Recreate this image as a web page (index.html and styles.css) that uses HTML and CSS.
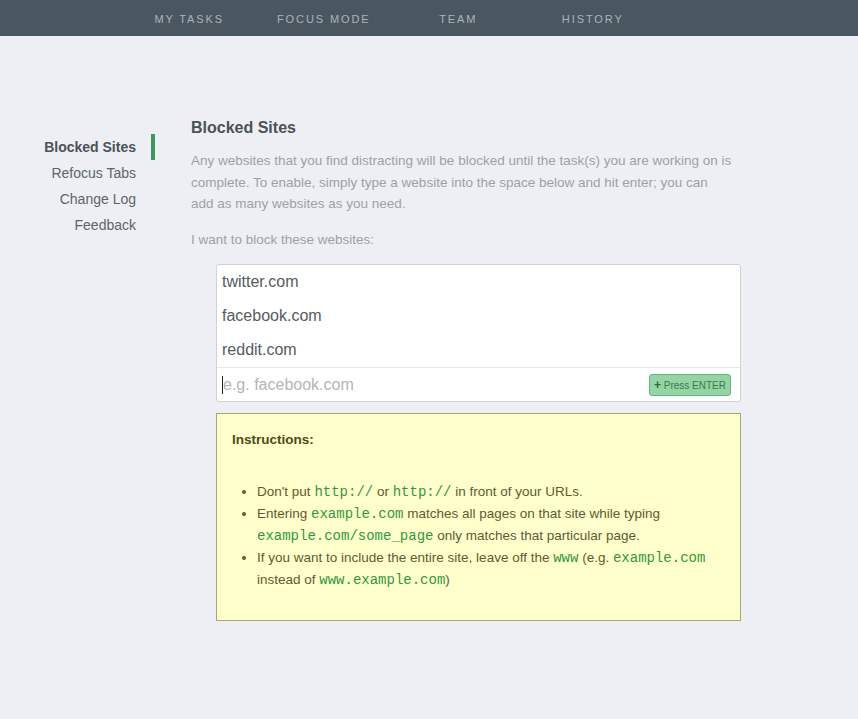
FILE: index.html
```html
<!DOCTYPE html>
<html>
<head>
<meta charset="utf-8">
<link rel="stylesheet" href="styles.css">
</head>
<body>
<header class="topbar">
  <nav class="nav">
    <a class="nav-item">MY TASKS</a>
    <a class="nav-item">FOCUS MODE</a>
    <a class="nav-item">TEAM</a>
    <a class="nav-item">HISTORY</a>
  </nav>
</header>
<div class="page">
  <aside class="sidebar">
    <a class="side-item active">Blocked Sites</a>
    <a class="side-item">Refocus Tabs</a>
    <a class="side-item">Change Log</a>
    <a class="side-item">Feedback</a>
  </aside>
  <main class="content">
    <h2 class="title">Blocked Sites</h2>
    <p class="desc">Any websites that you find distracting will be blocked until the task(s) you are working on is complete. To enable, simply type a website into the space below and hit enter; you can add as many websites as you need.</p>
    <p class="label">I want to block these websites:</p>
    <div class="sites">
      <div class="site">twitter.com</div>
      <div class="site">facebook.com</div>
      <div class="site">reddit.com</div>
      <div class="input-row">
        <span class="caret"></span><span class="placeholder">e.g. facebook.com</span>
        <span class="enter-btn"><span class="plus">+</span> Press ENTER</span>
      </div>
    </div>
    <div class="instructions">
      <h3 class="ins-title">Instructions:</h3>
      <ul class="ins-list">
        <li>Don't put <code>http://</code> or <code>http://</code> in front of your URLs.</li>
        <li>Entering <code>example.com</code> matches all pages on that site while typing <code>example.com/some_page</code> only matches that particular page.</li>
        <li>If you want to include the entire site, leave off the <code>www</code> (e.g. <code>example.com</code> instead of <code>www.example.com</code>)</li>
      </ul>
    </div>
  </main>
</div>
</body>
</html>
```
FILE: styles.css
```css
* { box-sizing: border-box; }
html, body { margin: 0; padding: 0; }
body {
  background: #eeeff4;
  font-family: "Liberation Sans", Arial, sans-serif;
  color: #4a5258;
  height: 719px;
  overflow: hidden;
}
.topbar {
  height: 36px;
  background: #4a5760;
}
.nav {
  display: flex;
  padding-left: 122px;
}
.nav-item {
  width: 134.5px;
  text-align: center;
  line-height: 38px;
  font-size: 11px;
  letter-spacing: 1.9px;
  color: #aab3b9;
}
.page {
  display: flex;
  padding-top: 83px;
}
.sidebar {
  width: 155px;
  display: flex;
  flex-direction: column;
  align-items: flex-end;
  padding-top: 15px;
}
.side-item {
  display: block;
  font-size: 14px;
  line-height: 26px;
  color: #5e6468;
  padding-right: 15px;
  border-right: 4px solid transparent;
}
.side-item.active {
  font-weight: bold;
  color: #4a5258;
  border-right-color: #3a9a5a;
}
.content {
  margin-left: 36px;
  width: 550px;
}
.title {
  margin: 0;
  font-size: 16px;
  line-height: 18px;
  font-weight: bold;
  color: #4a5258;
}
.desc {
  margin: 13px 0 0;
  width: 542px;
  font-size: 13.5px;
  line-height: 21.5px;
  color: #9da1a6;
}
.label {
  margin: 14.5px 0 0;
  font-size: 13.5px;
  line-height: 21px;
  color: #9da1a6;
}
.sites {
  margin: 14px 0 0 25px;
  width: 525px;
  background: #fff;
  border: 1px solid #cfd1d4;
  border-radius: 3px;
}
.site {
  font-size: 16px;
  line-height: 34px;
  color: #555b60;
  padding-left: 5px;
}
.input-row {
  display: flex;
  align-items: center;
  height: 34px;
  border-top: 1px solid #e6e7ea;
  padding: 0 9px 0 5px;
}
.caret {
  width: 1px;
  height: 18px;
  background: #222;
}
.placeholder {
  font-size: 16px;
  color: #b2b5b8;
  flex: 1;
}
.enter-btn {
  height: 22px;
  padding: 0 4px 0 4px;
  background: #93d5a5;
  border: 1px solid #62b97c;
  border-radius: 3px;
  font-size: 10px;
  line-height: 20px;
  color: #3c7a4c;
}
.plus {
  font-weight: bold;
  font-size: 12px;
  color: #2f6a3e;
}
.instructions {
  margin: 11px 0 0 25px;
  width: 525px;
  background: #ffffcc;
  border: 1px solid #a9a966;
  padding: 17px 15px 29px;
}
.ins-title {
  margin: 0;
  font-size: 13.5px;
  line-height: 18px;
  font-weight: bold;
  color: #4c4c14;
}
.ins-list {
  margin: 32px 0 0;
  padding-left: 25px;
  font-size: 13.5px;
  line-height: 22px;
  color: #5c5c32;
}
code {
  font-family: "Liberation Mono", "Courier New", monospace;
  font-size: 14px;
  line-height: 1;
  font-weight: normal;
  color: #2f9a3c;
}
```
